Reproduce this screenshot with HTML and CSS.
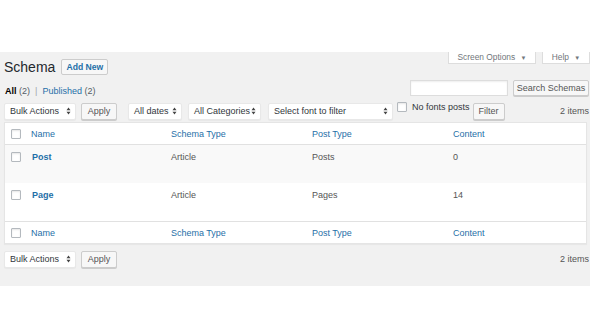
FILE: index.html
```html
<!DOCTYPE html>
<html lang="en">
<head>
    <meta charset="UTF-8">
    <title>Schema</title>
    <link rel="stylesheet" href="styles.css">
</head>
<body>
    <div class="wrap">
        <div class="page-top">
            <div class="title-group">
                <h1>Schema</h1>
                <a class="add-new" href="#">Add New</a>
            </div>
            <div class="screen-tabs">
                <button class="screen-tab tab-options">Screen Options <span class="caret">▼</span></button>
                <button class="screen-tab tab-help">Help <span class="caret">▼</span></button>
            </div>
        </div>

        <div class="sub-row">
            <ul class="subsubsub">
                <li><b>All</b> <span class="count">(2)</span></li>
                <li class="sep">|</li>
                <li><a href="#">Published</a> <span class="count">(2)</span></li>
            </ul>
            <div class="search-box">
                <input type="text" class="search-input">
                <button class="button">Search Schemas</button>
            </div>
        </div>

        <div class="tablenav">
            <div class="select w-bulk">Bulk Actions <svg class="arrows" viewBox="0 0 6 10"><path d="M3 0.5 L5.5 4 L0.5 4 Z M3 9.5 L5.5 6 L0.5 6 Z"/></svg></div>
            <button class="button btn-apply">Apply</button>
            <div class="select w-dates">All dates <svg class="arrows" viewBox="0 0 6 10"><path d="M3 0.5 L5.5 4 L0.5 4 Z M3 9.5 L5.5 6 L0.5 6 Z"/></svg></div>
            <div class="select w-cats">All Categories <svg class="arrows" viewBox="0 0 6 10"><path d="M3 0.5 L5.5 4 L0.5 4 Z M3 9.5 L5.5 6 L0.5 6 Z"/></svg></div>
            <div class="select w-font">Select font to filter <svg class="arrows" viewBox="0 0 6 10"><path d="M3 0.5 L5.5 4 L0.5 4 Z M3 9.5 L5.5 6 L0.5 6 Z"/></svg></div>
            <label class="no-fonts"><span class="checkbox"></span>No fonts posts</label>
            <button class="button btn-filter">Filter</button>
            <span class="items">2 items</span>
        </div>

        <div class="list-table">
            <div class="row head">
                <div class="cell cb"><span class="checkbox"></span></div>
                <div class="cell"><a href="#">Name</a></div>
                <div class="cell"><a href="#">Schema Type</a></div>
                <div class="cell"><a href="#">Post Type</a></div>
                <div class="cell"><a href="#">Content</a></div>
            </div>
            <div class="row item alt">
                <div class="cell cb"><span class="checkbox"></span></div>
                <div class="cell"><a class="title" href="#">Post</a></div>
                <div class="cell">Article</div>
                <div class="cell">Posts</div>
                <div class="cell">0</div>
            </div>
            <div class="row item">
                <div class="cell cb"><span class="checkbox"></span></div>
                <div class="cell"><a class="title" href="#">Page</a></div>
                <div class="cell">Article</div>
                <div class="cell">Pages</div>
                <div class="cell">14</div>
            </div>
            <div class="row head foot">
                <div class="cell cb"><span class="checkbox"></span></div>
                <div class="cell"><a href="#">Name</a></div>
                <div class="cell"><a href="#">Schema Type</a></div>
                <div class="cell"><a href="#">Post Type</a></div>
                <div class="cell"><a href="#">Content</a></div>
            </div>
        </div>

        <div class="tablenav bottom">
            <div class="select w-bulk">Bulk Actions <svg class="arrows" viewBox="0 0 6 10"><path d="M3 0.5 L5.5 4 L0.5 4 Z M3 9.5 L5.5 6 L0.5 6 Z"/></svg></div>
            <button class="button btn-apply">Apply</button>
            <span class="items">2 items</span>
        </div>
    </div>
</body>
</html>
```

FILE: styles.css
```css
:root {
    --bg-color: #f1f1f1;
    --link-color: #1f6fa8;
    --text-color: #32373c;
    --subtle-text-color: #555d66;
    --border-color: #dddddd;
    --table-border: #e5e5e5;
}

* { box-sizing: border-box; }

body {
    margin: 0;
    padding-top: 52px;
    background: #ffffff;
    font-family: 'Liberation Sans', Arial, sans-serif;
    font-size: 9px;
    color: var(--text-color);
    overflow: hidden;
}

a { color: var(--link-color); text-decoration: none; }

.wrap {
    background: var(--bg-color);
    padding: 0 1px 18px 4px;
}

/* --- top: title + screen tabs --- */
.page-top {
    display: flex;
    justify-content: space-between;
    height: 23px;
}
.title-group {
    align-self: flex-end;
    display: flex;
    align-items: center;
    gap: 6px;
}
h1 {
    margin: 0;
    font-size: 14px;
    font-weight: 400;
    line-height: 16px;
    color: #23282d;
}
.add-new {
    display: flex;
    align-items: center;
    justify-content: center;
    width: 47px;
    height: 16px;
    background: #f7f7f7;
    border: 1px solid #cccccc;
    border-radius: 2px;
    font-weight: 700;
    font-size: 8.6px;
}
.screen-tabs {
    align-self: flex-start;
    display: flex;
    gap: 6px;
    margin-right: -1px;
}
.screen-tab {
    height: 12px;
    padding: 0;
    background: #ffffff;
    border: 1px solid var(--border-color);
    border-top: none;
    font-family: inherit;
    font-size: 8.4px;
    color: #72777c;
    line-height: 10px;
}
.tab-options { width: 88px; }
.tab-help { width: 48px; }
.caret { font-size: 6px; margin-left: 3px; }

/* --- sub row: status links + search --- */
.sub-row {
    display: flex;
    justify-content: space-between;
    margin-top: 5px;
    height: 16px;
}
.subsubsub {
    align-self: flex-end;
    display: flex;
    gap: 4px;
    list-style: none;
    margin: 0 0 0 1px;
    padding: 0;
    line-height: 10px;
    color: #666;
}
.subsubsub b { color: #000; }
.subsubsub .sep { color: #a0a5aa; margin: 0 1px; }
.count { color: #555d66; }
.search-box { display: flex; gap: 5px; }
.search-input {
    width: 98px;
    height: 16px;
    border: 1px solid var(--border-color);
    box-shadow: inset 0 1px 2px rgba(0,0,0,0.07);
    background: #fff;
}
.search-box .button { width: 76px; height: 16px; }

.button {
    height: 17px;
    padding: 0;
    background: #f7f7f7;
    border: 1px solid #cccccc;
    border-radius: 2px;
    box-shadow: 0 1px 0 #cccccc;
    font-family: inherit;
    font-size: 9px;
    color: #555555;
}

/* --- tablenav --- */
.tablenav {
    display: flex;
    align-items: center;
    height: 18px;
    margin-top: 6px;
}
.select {
    display: flex;
    align-items: center;
    justify-content: space-between;
    height: 17px;
    padding: 0 4px 0 5px;
    background: #ffffff;
    border: 1px solid #e8e8e8;
    border-radius: 2px;
    box-shadow: 0 1px 1px rgba(0,0,0,0.04);
    color: var(--text-color);
    white-space: nowrap;
}
.arrows { width: 5px; height: 8px; fill: #444; flex-shrink: 0; }
.w-bulk { width: 72px; }
.btn-apply { width: 36px; margin-left: 5px; }
.w-dates { width: 54px; margin-left: 11px; }
.w-cats { width: 73px; margin-left: 6px; }
.w-font { width: 125px; margin-left: 7px; }
.no-fonts {
    display: flex;
    align-items: flex-start;
    align-self: flex-start;
    gap: 5px;
    margin-left: 4px;
    line-height: 10px;
    color: var(--text-color);
    white-space: nowrap;
}
.btn-filter { width: 32px; margin-left: 3px; }
.items { margin-left: auto; color: #555; }

.checkbox {
    display: inline-block;
    width: 10px;
    height: 10px;
    background: #fff;
    border: 1px solid #b4b9be;
    border-radius: 1px;
    box-shadow: inset 0 1px 2px rgba(0,0,0,0.1);
    flex-shrink: 0;
}

/* --- list table --- */
.list-table {
    margin-top: 2px;
    margin-right: 2px;
    background: #ffffff;
    border: 1px solid var(--table-border);
    box-shadow: 0 1px 1px rgba(0,0,0,0.04);
}
.row {
    display: grid;
    grid-template-columns: 26px 140px 141px 141px 1fr;
}
.row.head {
    height: 22px;
    align-items: center;
    border-bottom: 1px solid #e1e1e1;
}
.row.foot { border-bottom: none; border-top: 1px solid #e1e1e1; height: 22px; }
.row.item {
    height: 38px;
    padding-top: 7px;
    line-height: 10px;
    color: #555;
}
.row.alt { background: #f9f9f9; }
.cell.cb { display: flex; padding-left: 6px; }
.title { font-weight: 700; margin-left: 1px; }
```
